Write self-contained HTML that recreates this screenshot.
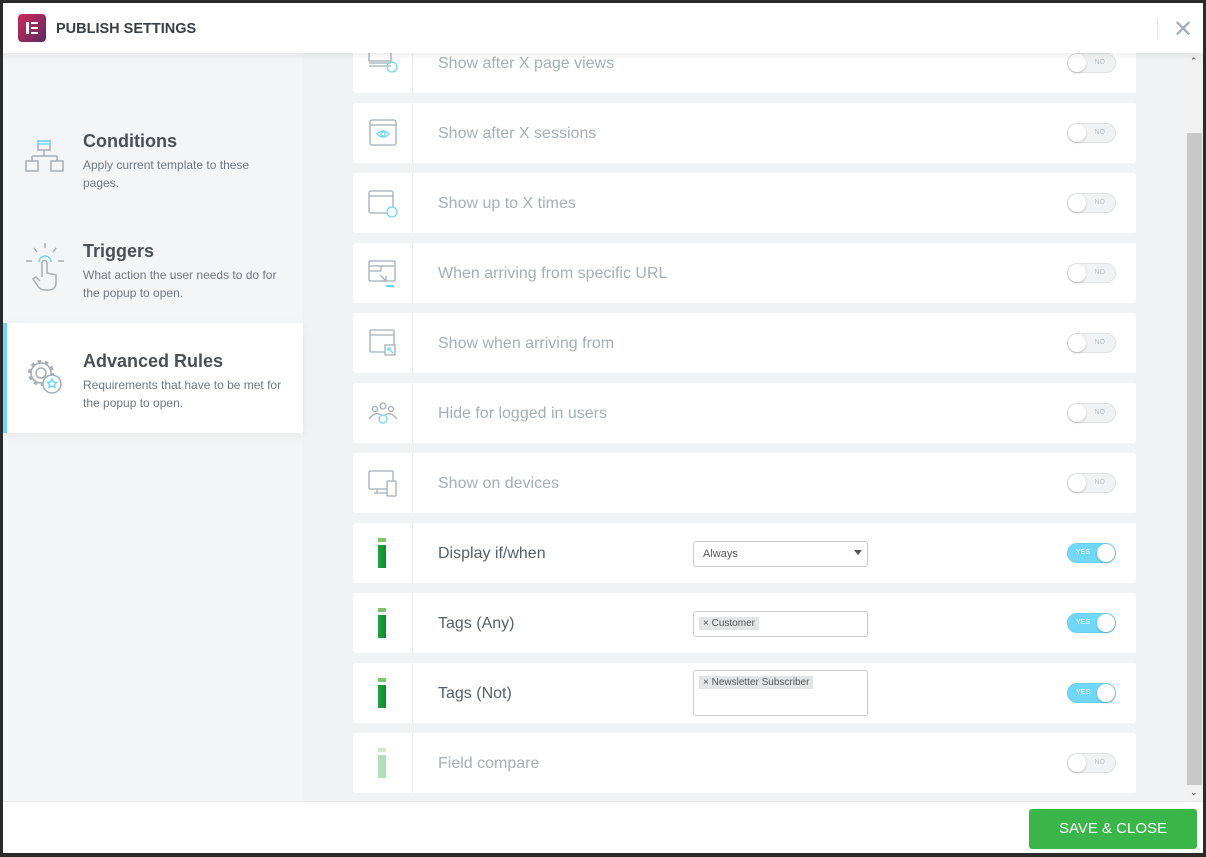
<!DOCTYPE html>
<html><head><meta charset="utf-8"><style>
*{box-sizing:border-box;margin:0;padding:0}
body{width:1206px;height:857px;background:#2a2a2a;font-family:"Liberation Sans",sans-serif;overflow:hidden;position:relative}
.modal{position:absolute;left:3px;top:3px;width:1200px;height:850px;background:#f1f2f3;overflow:hidden}
.hdr{position:absolute;left:0;top:0;width:1200px;height:50px;background:#fff;box-shadow:0 2px 8px rgba(0,0,0,.08);z-index:5}
.logo{position:absolute;left:15px;top:11px;width:28px;height:28px;border-radius:4px;background:linear-gradient(135deg,#d1295a,#5a2a5e)}
.logo i{position:absolute;background:#fff}
.title{position:absolute;left:53px;top:18px;font-size:14.5px;font-weight:bold;color:#383e45}
.sep{position:absolute;left:1154px;top:15px;width:1px;height:22px;background:#e4e6e8}
.x{position:absolute;left:1170px;top:12px;font-size:24px;color:#a4afb7}
.side{position:absolute;left:0;top:50px;width:300px;height:750px;background:#f4f5f7}
.item{position:absolute;left:0;width:300px;height:110px}
.item h3{position:absolute;left:80px;font-size:18px;color:#495157;font-weight:bold}
.item p{position:absolute;left:80px;font-size:12px;line-height:18px;color:#6d7882;width:205px}
.act{background:#fff;box-shadow:0 3px 10px rgba(0,0,0,.05)}
.act::before{content:"";position:absolute;left:0;top:0;width:4px;height:110px;background:#71d7f7}
.main{position:absolute;left:300px;top:0;width:883px;height:798px}
.row{position:absolute;left:50px;width:783px;height:60px;background:#fff;border-radius:3px}
.row .ic{position:absolute;left:0;top:0;width:60px;height:60px;border-right:1px solid #eceeef}
.row .lb{position:absolute;left:85px;top:22px;font-size:16px;color:#a4afb7}
.row.on .lb{color:#556068}
.tg{position:absolute;left:714px;top:20px;width:49px;height:20px;border-radius:10px;background:#f1f2f3;border:1px solid #e0e2e4}
.tg::before{content:"";position:absolute;left:0;top:0;width:18px;height:18px;border-radius:50%;background:#fff;box-shadow:0 1px 2px rgba(0,0,0,.2)}
.tg span{position:absolute;right:10px;top:5px;font-size:7px;color:#b8c0c6}
.tg.y{background:#71d7f7;border-color:#6bd0f0}
.tg.y::before{left:29px}
.tg.y span{left:8px;right:auto;color:#fff}
.bar{position:absolute;left:25px;top:15px;width:8px;height:30px}
.bar i{position:absolute;left:0;width:8px}
.in{position:absolute;left:340px;top:18px;width:175px;height:26px;border:1px solid #c8ccd0;border-radius:3px;font-size:11px;color:#555}
.chip{position:absolute;left:5px;top:5px;background:#e2e4e6;padding:1px 4px;font-size:10px;color:#555}
.sb{position:absolute;left:1183px;top:50px;width:17px;height:750px;background:#f1f1f1}
.thumb{position:absolute;left:1px;top:80px;width:15px;height:652px;background:#c8c8c8}
.ftr{position:absolute;left:0;top:798px;width:1200px;height:52px;background:#fff;border-top:1px solid #e6e8ea}
.btn{position:absolute;left:1026px;top:7px;width:168px;height:40px;background:#39b54a;border-radius:3px;color:#fff;font-size:15px;text-align:center;line-height:40px}
svg{position:absolute}
.ic svg{left:14px;top:14px}
</style></head><body>
<div class="modal">
<div class="side">
 <div class="item" style="top:30px">
  <svg style="left:22px;top:57px" width="40" height="36" viewBox="0 0 40 36" fill="none" stroke="#a4afb7" stroke-width="1.5"><rect x="13" y="1" width="12" height="9"/><rect x="13" y="1" width="12" height="3" stroke="#71d7f7"/><path d="M19 10v6M7 16h25M7 16v5M32 16v5"/><rect x="1" y="21" width="12" height="10"/><rect x="26" y="21" width="12" height="10"/></svg>
  <h3 style="top:48px">Conditions</h3><p style="top:73px;width:180px">Apply current template to these pages.</p></div>
 <div class="item" style="top:140px">
  <svg style="left:22px;top:50px" width="40" height="50" viewBox="0 0 40 50" fill="none" stroke="#a4afb7" stroke-width="1.5"><path d="M20 0v5M9 5l3 4M31 5l-3 4M1 18h6M33 18h6"/><path d="M14 19a6 6 0 0 1 12 0" stroke="#71d7f7"/><path d="M17 34V20a2.5 2.5 0 0 1 5 0v10l9 2v8c0 4-3 7-7 7h-5c-3 0-5-2-7-5l-4-6 3-2 4 4"/></svg>
  <h3 style="top:48px">Triggers</h3><p style="top:73px">What action the user needs to do for the popup to open.</p></div>
 <div class="item act" style="top:270px">
  <svg style="left:22px;top:34px" width="40" height="40" viewBox="0 0 40 40" fill="none" stroke="#a4afb7"><circle cx="16" cy="16" r="11" stroke-width="4" stroke-dasharray="3.5 3.4"/><circle cx="16" cy="16" r="10" stroke-width="1.5" fill="#fff"/><circle cx="16" cy="16" r="5" stroke-width="1.5"/><circle cx="27" cy="27" r="9" stroke-width="1.5" fill="#fff"/><path d="M27 22l1.5 3 3 .5-2 2 .5 3-3-1.5-3 1.5.5-3-2-2 3-.5z" stroke="#71d7f7" stroke-width="1.5"/></svg>
  <h3 style="top:28px">Advanced Rules</h3><p style="top:53px">Requirements that have to be met for the popup to open.</p></div>
</div>
<div class="main">
 <div class="row" style="top:30px"><div class="ic"><svg width="32" height="32" viewBox="0 0 32 32" fill="none" stroke="#a4afb7" stroke-width="1.3"><rect x="2" y="-4" width="22" height="18"/><path d="M2 16h22M2 19h22"/><circle cx="25" cy="20" r="5" stroke="#71d7f7"/></svg></div><div class="lb">Show after X page views</div><div class="tg"><span>NO</span></div></div>
 <div class="row" style="top:100px"><div class="ic"><svg width="32" height="32" viewBox="0 0 32 32" fill="none" stroke="#a4afb7" stroke-width="1.3"><rect x="3" y="3" width="26" height="25" rx="2"/><path d="M3 8h26"/><path d="M10 17q6-6 12 0q-6 6-12 0z" stroke="#71d7f7"/><circle cx="16" cy="17" r="2" stroke="#71d7f7"/></svg></div><div class="lb">Show after X sessions</div><div class="tg"><span>NO</span></div></div>
 <div class="row" style="top:170px"><div class="ic"><svg width="32" height="32" viewBox="0 0 32 32" fill="none" stroke="#a4afb7" stroke-width="1.3"><rect x="2" y="4" width="24" height="22" rx="2"/><path d="M2 9h24"/><circle cx="25" cy="25" r="5" stroke="#71d7f7" fill="#fff"/></svg></div><div class="lb">Show up to X times</div><div class="tg"><span>NO</span></div></div>
 <div class="row" style="top:240px"><div class="ic"><svg width="32" height="32" viewBox="0 0 32 32" fill="none" stroke="#a4afb7" stroke-width="1.3"><rect x="2" y="4" width="26" height="20" rx="1"/><path d="M2 9h26M2 14h12v-5M13 18l6 6M19 19v5h-5"/><path d="M19 29h8" stroke="#71d7f7" stroke-width="2"/></svg></div><div class="lb">When arriving from specific URL</div><div class="tg"><span>NO</span></div></div>
 <div class="row" style="top:310px"><div class="ic"><svg width="32" height="32" viewBox="0 0 32 32" fill="none" stroke="#a4afb7" stroke-width="1.3"><rect x="3" y="3" width="24" height="22" rx="1"/><path d="M3 8h24"/><rect x="18" y="18" width="10" height="10" fill="#fff"/><path d="M21 21l5 5M21 21v3M21 21h3" stroke="#71d7f7"/></svg></div><div class="lb">Show when arriving from</div><div class="tg"><span>NO</span></div></div>
 <div class="row" style="top:380px"><div class="ic"><svg width="32" height="32" viewBox="0 0 32 32" fill="none" stroke="#a4afb7" stroke-width="1.3"><circle cx="16" cy="9" r="3"/><circle cx="8" cy="12" r="2.5"/><circle cx="24" cy="12" r="2.5"/><path d="M2 22q6-8 12-4M30 22q-6-8-12-4"/><circle cx="16" cy="22" r="4" stroke="#71d7f7"/></svg></div><div class="lb">Hide for logged in users</div><div class="tg"><span>NO</span></div></div>
 <div class="row" style="top:450px"><div class="ic"><svg width="32" height="32" viewBox="0 0 32 32" fill="none" stroke="#a4afb7" stroke-width="1.3"><rect x="2" y="4" width="24" height="18" rx="1"/><path d="M10 22v4h10M7 26h14"/><rect x="20" y="14" width="9" height="15" rx="1" fill="#fff"/></svg></div><div class="lb">Show on devices</div><div class="tg"><span>NO</span></div></div>
 <div class="row on" style="top:520px"><div class="ic"><div class="bar"><i style="top:0;height:4px;background:#7cc56b"></i><i style="top:7px;height:23px;background:linear-gradient(90deg,#22a23c,#0f8a30)"></i></div></div><div class="lb">Display if/when</div><div class="in" style="top:18px"><span style="position:absolute;left:9px;top:6px">Always</span><span style="position:absolute;right:5px;top:8px;border:4px solid transparent;border-top:5px solid #555"></span></div><div class="tg y"><span>YES</span></div></div>
 <div class="row on" style="top:590px"><div class="ic"><div class="bar"><i style="top:0;height:4px;background:#7cc56b"></i><i style="top:7px;height:23px;background:linear-gradient(90deg,#22a23c,#0f8a30)"></i></div></div><div class="lb">Tags (Any)</div><div class="in"><span class="chip">× Customer</span></div><div class="tg y"><span>YES</span></div></div>
 <div class="row on" style="top:660px"><div class="ic"><div class="bar"><i style="top:0;height:4px;background:#7cc56b"></i><i style="top:7px;height:23px;background:linear-gradient(90deg,#22a23c,#0f8a30)"></i></div></div><div class="lb">Tags (Not)</div><div class="in" style="top:7px;height:46px"><span class="chip">× Newsletter Subscriber</span></div><div class="tg y"><span>YES</span></div></div>
 <div class="row" style="top:730px"><div class="ic"><div class="bar" style="opacity:.35"><i style="top:0;height:4px;background:#7cc56b"></i><i style="top:7px;height:23px;background:#22a23c"></i></div></div><div class="lb">Field compare</div><div class="tg"><span>NO</span></div></div>
</div>
<div class="sb"><div class="thumb"></div><span style="position:absolute;left:4px;top:3px;font-size:9px;color:#555">⌃</span><span style="position:absolute;left:4px;top:734px;font-size:9px;color:#555">⌄</span></div>
<div class="hdr"><div class="logo"><i style="left:8px;top:8px;width:3px;height:12px"></i><i style="left:13px;top:8px;width:7px;height:2px"></i><i style="left:13px;top:13px;width:7px;height:2px"></i><i style="left:13px;top:18px;width:7px;height:2px"></i></div><div class="title">PUBLISH SETTINGS</div><div class="sep"></div><div class="x">✕</div></div>
<div class="ftr"><div class="btn">SAVE &amp; CLOSE</div></div>
</div>
</body></html>
